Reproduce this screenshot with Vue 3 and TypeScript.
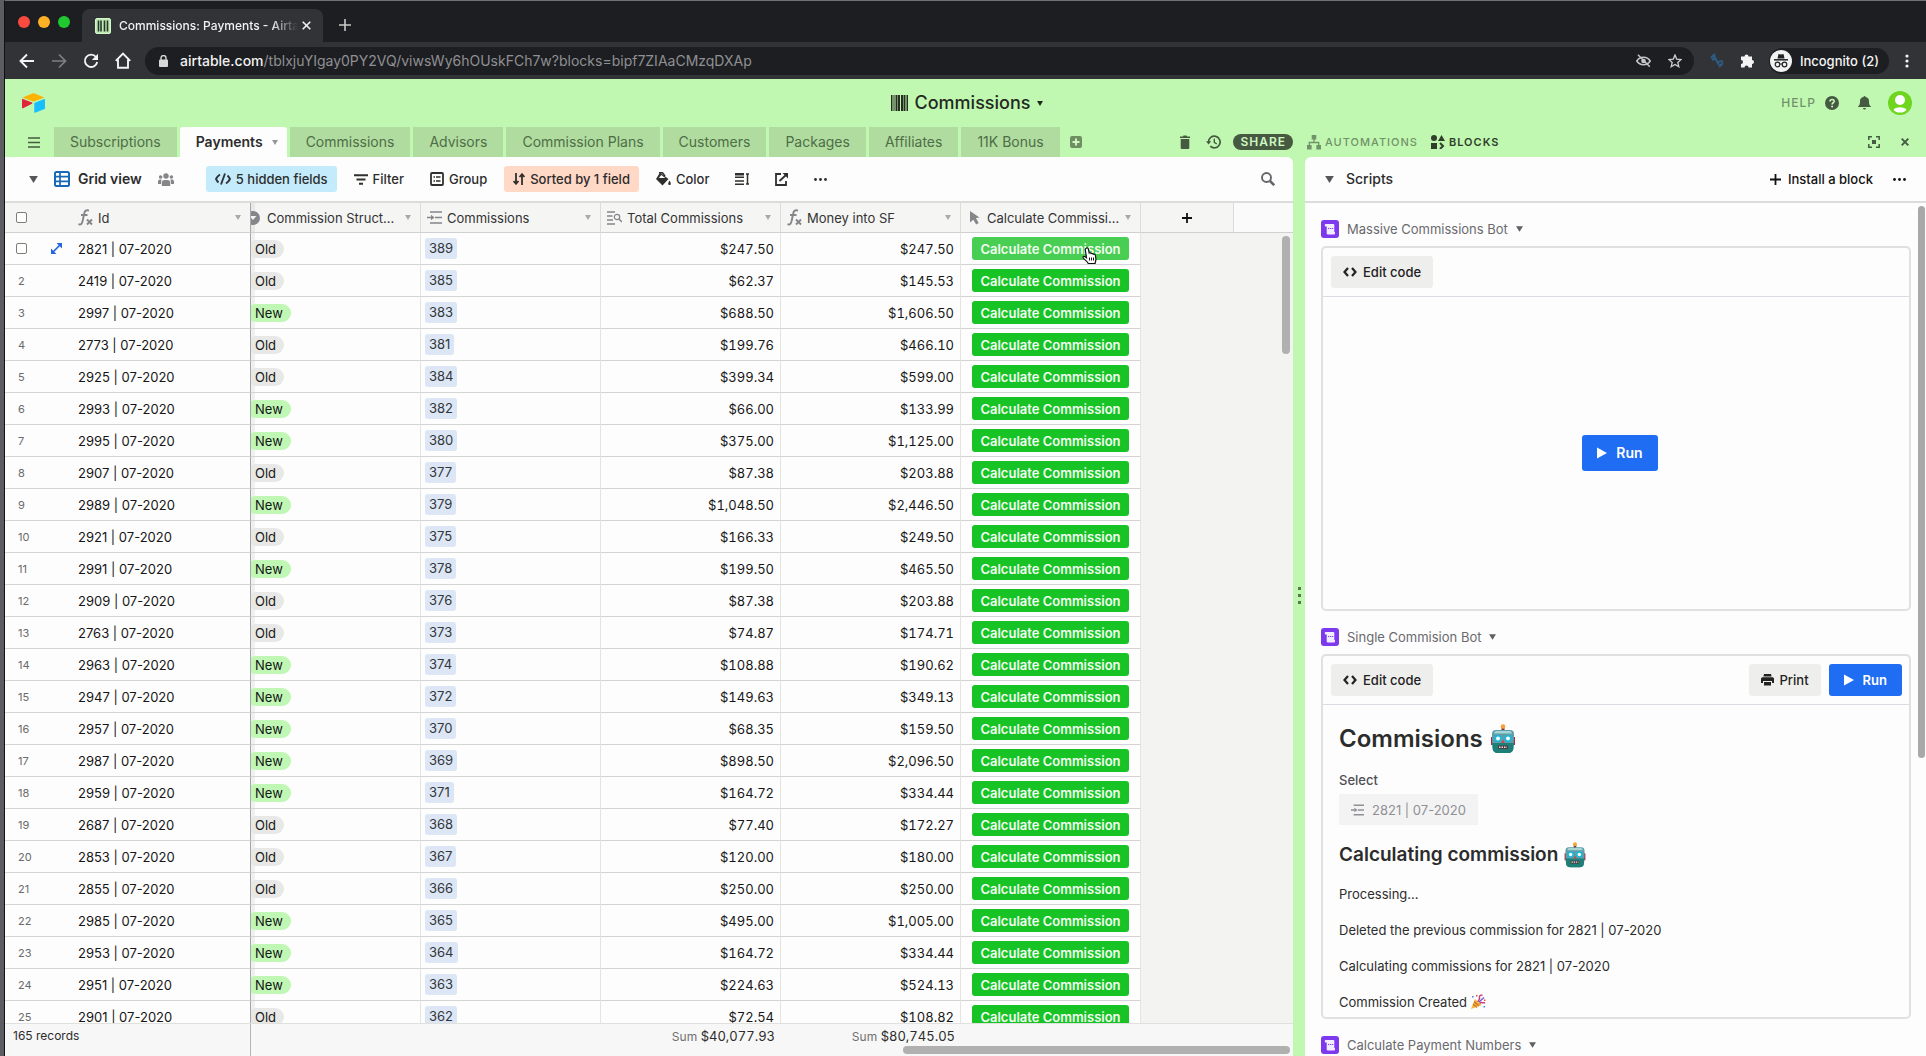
<script setup lang="ts">
import { ref } from 'vue'

interface Payment {
  id: string
  structure: 'Old' | 'New'
  commission: string
  total: string
  money: string
}

const source: [string, 'Old' | 'New', string, string, string][] = [
  ['2821', 'Old', '389', '$247.50', '$247.50'],
  ['2419', 'Old', '385', '$62.37', '$145.53'],
  ['2997', 'New', '383', '$688.50', '$1,606.50'],
  ['2773', 'Old', '381', '$199.76', '$466.10'],
  ['2925', 'Old', '384', '$399.34', '$599.00'],
  ['2993', 'New', '382', '$66.00', '$133.99'],
  ['2995', 'New', '380', '$375.00', '$1,125.00'],
  ['2907', 'Old', '377', '$87.38', '$203.88'],
  ['2989', 'New', '379', '$1,048.50', '$2,446.50'],
  ['2921', 'Old', '375', '$166.33', '$249.50'],
  ['2991', 'New', '378', '$199.50', '$465.50'],
  ['2909', 'Old', '376', '$87.38', '$203.88'],
  ['2763', 'Old', '373', '$74.87', '$174.71'],
  ['2963', 'New', '374', '$108.88', '$190.62'],
  ['2947', 'New', '372', '$149.63', '$349.13'],
  ['2957', 'New', '370', '$68.35', '$159.50'],
  ['2987', 'New', '369', '$898.50', '$2,096.50'],
  ['2959', 'New', '371', '$164.72', '$334.44'],
  ['2687', 'Old', '368', '$77.40', '$172.27'],
  ['2853', 'Old', '367', '$120.00', '$180.00'],
  ['2855', 'Old', '366', '$250.00', '$250.00'],
  ['2985', 'New', '365', '$495.00', '$1,005.00'],
  ['2953', 'New', '364', '$164.72', '$334.44'],
  ['2951', 'New', '363', '$224.63', '$524.13'],
  ['2901', 'Old', '362', '$72.54', '$108.82'],
]
const rows: Payment[] = source.map(([n, structure, commission, total, money]) => ({
  id: `${n} | 07-2020`,
  structure,
  commission,
  total,
  money,
}))

const tabs = ['Subscriptions', 'Payments', 'Commissions', 'Advisors', 'Commission Plans', 'Customers', 'Packages', 'Affiliates', '11K Bonus']
const active = ref('Payments')
const output = ['Processing...', 'Deleted the previous commission for 2821 | 07-2020', 'Calculating commissions for 2821 | 07-2020']
</script>

<template>
  <div class="desktop">
    <svg class="sprite" aria-hidden="true">
      <symbol id="caret" viewBox="0 0 10 8"><path d="M0 0h10L5 8z" fill="currentColor" /></symbol>
      <symbol id="fx" viewBox="0 0 15 17">
        <path d="M0.5 15.2c2.6 1 3.6-.8 4.200-3.600L6.200 4.500C6.700 1.800 8.300.6 11 1.600M3 6h6.500" fill="none" stroke="currentColor" stroke-width="1.900" />
        <path d="M9 10.500l5 5M14 10.500l-5 5" stroke="currentColor" stroke-width="1.900" />
      </symbol>
      <symbol id="link" viewBox="0 0 15 13">
        <path d="M3 1h12M8 6.500h7M3 12h12M0 6.500h5" stroke="currentColor" stroke-width="1.700" />
        <path d="M4 3.800L7.500 6.500 4 9.200z" fill="currentColor" />
      </symbol>
      <symbol id="lookup" viewBox="0 0 15 14">
        <path d="M0 1h8M0 5h5.500M0 9h6M0 13h8" stroke="currentColor" stroke-width="1.700" />
        <circle cx="10" cy="6" r="2.700" fill="none" stroke="currentColor" stroke-width="1.200" />
        <path d="M12 8l3 3" stroke="currentColor" stroke-width="1.500" />
      </symbol>
      <symbol id="code" viewBox="0 0 14 10">
        <path d="M5 1L1.500 5 5 9M9 1l3.500 4L9 9" fill="none" stroke="currentColor" stroke-width="2.200" />
      </symbol>
      <symbol id="play" viewBox="0 0 10 12"><path d="M0 0.500L10 6 0 11.500z" fill="currentColor" /></symbol>
      <symbol id="script" viewBox="0 0 18 18">
        <rect width="18" height="18" rx="3" fill="#7c39ed" />
        <path d="M4.500 4h8A.8.8 0 0 1 13.300 4.800V12h.7v1.500a1 1 0 0 1-1 1H7A1.300 1.300 0 0 1 5.700 13.200V6.500H4.500A1 1 0 0 1 3.800 5.200 1 1 0 0 1 4.500 4z" fill="#f3ecff" />
        <path d="M7 8.500h1.200M9 8.500h1.200M11 8.500h1.200" stroke="#7c39ed" stroke-width="1.200" />
      </symbol>
      <symbol id="dots" viewBox="0 0 13 3">
        <circle cx="1.500" cy="1.500" r="1.400" fill="currentColor" /><circle cx="6.500" cy="1.500" r="1.400" fill="currentColor" /><circle cx="11.500" cy="1.500" r="1.400" fill="currentColor" />
      </symbol>
      <symbol id="robot" viewBox="0 0 24 30">
        <path d="M10.500 3h3v4h-3z" fill="#6d3b3a" />
        <circle cx="12" cy="2.500" r="2.300" fill="#f8a13a" />
        <path d="M0 13h3v8H0zM21 13h3v8h-3z" fill="#a82c48" />
        <path d="M5 6h14a4 4 0 0 1 4 4v4l-.5 10a5 5 0 0 1-5 5h-11a5 5 0 0 1-5-5L1 14v-4a4 4 0 0 1 4-4z" fill="#5b9faa" />
        <path d="M1.300 19h21.400l-.4 5.500a4.500 4.500 0 0 1-4.500 4.500H6.200a4.500 4.500 0 0 1-4.500-4.500z" fill="#1d7f78" />
        <path d="M5 7h14a3 3 0 0 1 2 2.500H3A3 3 0 0 1 5 7z" fill="#a9d4d6" />
        <circle cx="7" cy="14.500" r="3.500" fill="#18b8dc" /><circle cx="17" cy="14.500" r="3.500" fill="#18b8dc" />
        <circle cx="7" cy="14.500" r="2" fill="#f4ffff" /><circle cx="17" cy="14.500" r="2" fill="#f4ffff" />
        <path d="M12 15.500l1.700 3.500h-3.400z" fill="#d5443f" />
        <path d="M7 21.500h10v3.500H7z" fill="#4a3d48" /><path d="M8 23.200h8" stroke="#e9e0cf" stroke-width="1.600" stroke-dasharray="1.500 1" />
      </symbol>
    </svg>

    <header class="chrome">
      <div class="strip">
        <span class="light red"></span><span class="light amber"></span><span class="light green"></span>
        <div class="browser-tab">
          <svg width="16" height="16" viewBox="0 0 16 16"><rect x="0.500" y="0.500" width="15" height="15" rx="1.500" fill="#bfe8b4" stroke="#d3f8c8" /><path d="M3.500 2.500v11M6 2.500v11M9.500 2.500v11M12.500 2.500v11" stroke="#26352a" stroke-width="1.600" /></svg>
          <span class="tab-title">Commissions: Payments - Airta</span>
          <button class="plain" aria-label="Close tab"><svg width="9" height="9" viewBox="0 0 9 9"><path d="M.7.7l7.600 7.600M8.300.7L.7 8.300" stroke="#f1f1f1" stroke-width="1.600" /></svg></button>
        </div>
        <button class="plain new-tab" aria-label="New tab"><svg width="12" height="12" viewBox="0 0 12 12"><path d="M6 0v12M0 6h12" stroke="#c9c9c9" stroke-width="1.600" /></svg></button>
      </div>
      <div class="nav">
        <button class="plain" aria-label="Back"><svg width="16" height="16" viewBox="0 0 16 16" fill="none" stroke="#f4f4f4" stroke-width="1.900"><path d="M15 8H2M8 1.500L1.500 8 8 14.500" /></svg></button>
        <button class="plain" aria-label="Forward"><svg width="16" height="16" viewBox="0 0 16 16" fill="none" stroke="#7f8083" stroke-width="1.700"><path d="M1 8h13M8 1.500L14.500 8 8 14.500" /></svg></button>
        <button class="plain" aria-label="Reload"><svg width="16" height="16" viewBox="0 0 16 16"><path d="M13 4A6.200 6.200 0 1 0 14.200 9" fill="none" stroke="#f4f4f4" stroke-width="1.900" /><path d="M15 .8V7H8.800z" fill="#f4f4f4" /></svg></button>
        <button class="plain" aria-label="Home"><svg width="16" height="17" viewBox="0 0 16 17"><path d="M.8 8.800L8 1.500l7.200 7.300M3 7.500V15.800h10V7.500" fill="none" stroke="#f4f4f4" stroke-width="1.900" /></svg></button>
        <div class="omnibox">
          <svg width="9" height="12" viewBox="0 0 9 12"><rect y="4.500" width="9" height="7.500" rx="1" fill="#d8d8d8" /><path d="M2 5V3a2.500 2.500 0 0 1 5 0v2" fill="none" stroke="#d8d8d8" stroke-width="1.400" /></svg>
          <span class="url"><b>airtable.com</b>/tblxjuYIgay0PY2VQ/viwsWy6hOUskFCh7w?blocks=bipf7ZIAaCMzqDXAp</span>
          <svg width="15" height="14" viewBox="0 0 15 14"><path d="M.8 7C4 2 11 2 14.200 7 11 12 4 12 .8 7z" fill="none" stroke="#c5c5c8" stroke-width="1.500" /><circle cx="7.500" cy="7" r="2.300" fill="#c5c5c8" /><path d="M2 .8L13.800 12.800" stroke="#c5c5c8" stroke-width="1.500" /></svg>
          <svg width="14" height="14" viewBox="0 0 14 14"><path d="M7 1l1.700 4.100 4.400.4-3.300 2.900 1 4.300L7 10.400l-3.800 2.300 1-4.300L.9 5.500l4.400-.4z" fill="none" stroke="#d0d0d3" stroke-width="1.300" /></svg>
        </div>
        <svg class="ext" width="14" height="15" viewBox="0 0 14 15"><path d="M4 3l5 9M1 5l4-4M2 7l4-2M8 9l5-1M9 14l4-4" stroke="#2d5d86" stroke-width="2" /></svg>
        <svg class="puzzle" width="15" height="15" viewBox="0 0 15 15"><path d="M1 3.500h3.500a2 2 0 1 1 4 0H12V7a2 2 0 1 1 0 4v3.500H8.500a2 2 0 1 0-4 0H1V11a2 2 0 1 0 0-4z" fill="#f4f4f4" /></svg>
        <button class="incognito">
          <svg width="22" height="22" viewBox="0 0 22 22"><circle cx="11" cy="11" r="11" fill="#f1f1f1" /><path d="M7.500 8.500l1-4.500 2.500.6 2.500-.6 1 4.500z" fill="#202124" /><path d="M4 9.800h14" stroke="#202124" stroke-width="1.500" /><circle cx="7.500" cy="14.500" r="2.300" fill="none" stroke="#202124" stroke-width="1.200" /><circle cx="14.500" cy="14.500" r="2.300" fill="none" stroke="#202124" stroke-width="1.200" /><path d="M9.500 14h3" stroke="#202124" /></svg>
          Incognito (2)
        </button>
        <button class="plain" aria-label="Browser menu"><svg width="4" height="14" viewBox="0 0 4 14" fill="#f4f4f4"><circle cx="2" cy="2" r="1.600" /><circle cx="2" cy="7" r="1.600" /><circle cx="2" cy="12" r="1.600" /></svg></button>
      </div>
    </header>

    <div class="basebar">
      <svg class="logo" width="23" height="20" viewBox="0 0 23 20"><path d="M10.300.4a3 3 0 0 1 2.300 0l8.700 3.500c.5.2.5.8 0 1l-8.700 3.400a3 3 0 0 1-2.300 0L1.700 4.900c-.5-.2-.5-.8 0-1z" fill="#fcb400" /><path d="M12.300 10.300v8.900c0 .4.400.7.800.5l9.500-3.700a.6.600 0 0 0 .4-.5V6.500c0-.4-.4-.7-.8-.5l-9.500 3.700a.6.600 0 0 0-.4.600z" fill="#18bfff" /><path d="M10 10.700L1 15.200c-.4.200-1-.1-1-.5V6.500c0-.5.500-.8 1-.6l9 3.700c.5.300.5.900 0 1.100z" fill="#e0243c" /></svg>
      <button class="base-name">
        <svg width="17" height="16" viewBox="0 0 17 16" fill="#262e22"><path d="M0 0h1.500v16H0zM2.500 0h1v16h-1zM4.500 0H6v16H4.500zM6.500 0H9v16H6.500zM10 0h2.500v16H10zM13 0h1.500v16H13zM15.500 0H17v16h-1.500z" /></svg>
        <span>Commissions</span>
        <svg class="c6"><use href="#caret" /></svg>
      </button>
      <div class="account">
        <a href="#help" class="caps muted">HELP</a>
        <svg width="14" height="14" viewBox="0 0 14 14"><circle cx="7" cy="7" r="7" fill="#455a40" /><path d="M5 5.500C5 2.700 9.200 2.900 9.200 5.300 9.200 6.800 7.100 6.700 7.100 8.400" fill="none" stroke="#c8f7b8" stroke-width="1.600" /><circle cx="7.100" cy="10.500" r="1" fill="#c8f7b8" /></svg>
        <svg class="bell" width="13" height="14" viewBox="0 0 13 14"><path d="M6.500 0a1 1 0 0 1 1 1c2.500.5 3.500 2 3.500 4 0 3 .4 4.500 2 5.600V11H0v-.4C1.600 9.500 2 8 2 5c0-2 1-3.500 3.500-4a1 1 0 0 1 1-1zM5 12h3a1.500 1.500 0 0 1-3 0z" fill="#455a40" /></svg>
        <svg width="24" height="24" viewBox="0 0 24 24"><circle cx="12" cy="12" r="12" fill="#6fd51f" /><circle cx="12" cy="9" r="5" fill="#fff" /><path d="M5.500 19c1-3.600 12-3.600 13 0-2.500 3.400-10.500 3.400-13 0z" fill="#fff" /></svg>
      </div>
    </div>

    <div class="tabbar">
      <div class="tabs-left">
        <button class="plain burger" aria-label="All tables"><svg width="12" height="11" viewBox="0 0 12 11"><path d="M0 1h12M0 5.500h12M0 10h12" stroke="#455a40" stroke-width="1.700" /></svg></button>
        <nav class="tabs" role="tablist">
          <button v-for="t in tabs" :key="t" class="tab" role="tab" :class="{ active: t === active }" :aria-selected="t === active" @click="active = t">
            {{ t }}<svg v-if="t === active" class="c6"><use href="#caret" /></svg>
          </button>
        </nav>
        <button class="plain" aria-label="Add table"><svg width="12" height="12" viewBox="0 0 12 12"><rect width="12" height="12" rx="2" fill="#6d8f62" /><path d="M6 2.500v7M2.500 6h7" stroke="#d2f8c6" stroke-width="1.900" /></svg></button>
        <span class="grow"></span>
        <button class="plain" aria-label="Trash"><svg width="10" height="14" viewBox="0 0 10 14"><path d="M0 1.500h3L3.500.5h3L7 1.500h3V3H0zM.7 4h8.600v9a1 1 0 0 1-1 1H1.700a1 1 0 0 1-1-1z" fill="#455a40" /></svg></button>
        <button class="plain history" aria-label="History"><svg width="15" height="14" viewBox="0 0 15 14"><path d="M2.500 7a5.800 5.800 0 1 1 1.800 4.200" fill="none" stroke="#455a40" stroke-width="1.700" /><path d="M0 6.200h5.200L2.600 9.500z" fill="#455a40" /><path d="M8.300 3.800V7.400l2.500 1.600" fill="none" stroke="#455a40" stroke-width="1.400" /></svg></button>
        <button class="share caps">SHARE</button>
      </div>
      <div class="tabs-right">
        <button class="side caps muted"><svg width="14" height="15" viewBox="0 0 14 15" fill="#72926a"><path d="M4.700 0h4.600v4.600H4.700zM0 10h4.600v4.600H0zM9.400 10H14v4.600H9.400z" /><path d="M7 4v3.500M2.300 10.500v-3h9.400v3" fill="none" stroke="#72926a" stroke-width="1.300" /></svg>AUTOMATIONS</button>
        <button class="side caps dark"><svg width="14" height="14" viewBox="0 0 14 14" fill="#303f2b"><circle cx="3" cy="3" r="3" /><path d="M10.500 0L14 6H7zM0 8h6v6H0z" /><path d="M9 8l3 3-3 3" fill="none" stroke="#303f2b" stroke-width="2" /></svg>BLOCKS</button>
        <span class="grow"></span>
        <button class="plain" aria-label="Fullscreen"><svg width="12" height="12" viewBox="0 0 12 12"><path d="M.8 4V.8H4M8 .8h3.200V4M11.200 8v3.200H8M4 11.200H.8V8" fill="none" stroke="#455a40" stroke-width="1.500" /><path d="M4 4h4v4H4z" fill="#455a40" /></svg></button>
        <button class="plain close-blocks" aria-label="Close blocks"><svg width="8" height="8" viewBox="0 0 8 8"><path d="M.7.7l6.600 6.600M7.300.7L.7 7.300" stroke="#455a40" stroke-width="1.900" /></svg></button>
      </div>
    </div>

    <main class="workspace">
      <section class="grid-panel">
        <div class="toolbar">
          <button class="plain" aria-label="Views"><svg class="c8"><use href="#caret" /></svg></button>
          <button class="view-name"><svg width="16" height="16" viewBox="0 0 16 16"><rect x="1" y="1" width="14" height="14" rx="1.500" fill="#fff" stroke="#1968b8" stroke-width="2" /><path d="M1 5.700h14M1 10.300h14M6 1v14" stroke="#1968b8" stroke-width="1.700" /></svg>Grid view</button>
          <svg class="people" width="16" height="13" viewBox="0 0 16 13" fill="#85858a"><circle cx="8" cy="3" r="2.700" /><circle cx="2.600" cy="4" r="1.800" /><circle cx="13.400" cy="4" r="1.800" /><path d="M3.800 13V10a3 3 0 0 1 3-3h2.400a3 3 0 0 1 3 3v3zM0 11V8.500a2 2 0 0 1 2-2h1.500L3 11zM16 11V8.500a2 2 0 0 0-2-2h-1.500L13 11z" /></svg>
          <div class="tools">
            <button class="tool hidden"><svg width="16" height="12" viewBox="0 0 16 12" fill="none" stroke="#30353b" stroke-width="1.900"><path d="M5 1.500Q2.500 3 1 6q1 2 2.500 3.500M11 10.500Q13.500 9 15 6q-1-2-2.500-3.500M10 .5L6 11.500" /></svg>5 hidden fields</button>
            <button class="tool"><svg width="14" height="11" viewBox="0 0 14 11"><path d="M0 1.200h14M2.500 5.500h9M5 9.800h4" stroke="#30302e" stroke-width="2" /></svg>Filter</button>
            <button class="tool"><svg width="14" height="14" viewBox="0 0 14 14"><rect x="1" y="1" width="12" height="12" rx="1" fill="none" stroke="#30302e" stroke-width="1.800" /><path d="M3.500 5h1.500M6 5h4.500M3.500 9h1.500M6 9h4.500" stroke="#30302e" stroke-width="1.700" /></svg>Group</button>
            <button class="tool sorted"><svg width="12" height="12" viewBox="0 0 12 12" fill="none" stroke="#30302e" stroke-width="1.800"><path d="M3 0v10.500M.5 8L3 10.800 5.500 8M9 12V1.500M6.500 4L9 1.200 11.500 4" /></svg>Sorted by 1 field</button>
            <button class="tool"><svg width="15" height="14" viewBox="0 0 15 14"><path d="M4 .5l8.500 6.500L6.500 13.500 0 7z" fill="#30302e" /><path d="M5.200 3L2.800 6h6.500z" fill="#fdfdfd" /><path d="M3 .8h3.500L9 4" fill="none" stroke="#30302e" stroke-width="1.500" /><path d="M13.500 8.500c1.700 2.400 1.700 4.500 0 4.500s-1.700-2.100 0-4.500z" fill="#30302e" /></svg>Color</button>
            <button class="tool" aria-label="Row height"><svg width="14" height="12" viewBox="0 0 14 12"><path d="M0 4.300h9M0 8h9M0 11.200h9M12.500 1v10M11 1h3M11 11h3" stroke="#30302e" stroke-width="1.500" /><path d="M0 1.300h9" stroke="#30302e" stroke-width="2.600" /></svg></button>
            <button class="tool" aria-label="Share view"><svg width="13" height="13" viewBox="0 0 13 13" fill="none" stroke="#30302e" stroke-width="1.800"><path d="M6 1H1v11h10V8M4.500 8L11 2" /><path d="M7.500 0H13v5.500z" fill="#30302e" stroke="none" /></svg></button>
            <button class="tool" aria-label="More"><svg width="13" height="3"><use href="#dots" /></svg></button>
          </div>
          <span class="grow"></span>
          <button class="plain search" aria-label="Search"><svg width="14" height="14" viewBox="0 0 14 14"><circle cx="5.500" cy="5.500" r="4.500" fill="none" stroke="#65656a" stroke-width="1.900" /><path d="M9 9l4.200 4.200" stroke="#65656a" stroke-width="2.600" /></svg></button>
        </div>

        <div class="sheet">
          <table>
            <colgroup>
              <col class="w-num" /><col class="w-id" /><col class="w-struct" /><col class="w-field" /><col class="w-field" /><col class="w-field" /><col class="w-field" /><col class="w-add" /><col />
            </colgroup>
            <thead>
              <tr>
                <th><div class="num"><input type="checkbox" aria-label="Select all rows" /></div></th>
                <th class="frozen"><div class="head first"><svg width="15" height="17"><use href="#fx" /></svg><span>Id</span><svg class="c6"><use href="#caret" /></svg></div></th>
                <th class="under"><div class="head clipped"><svg width="14" height="14" viewBox="0 0 14 14"><circle cx="7" cy="7" r="7" fill="#85858a" /><path d="M3.500 5L7 9l3.500-4z" fill="#f4f4f2" /></svg><span>Commission Struct...</span><svg class="c6"><use href="#caret" /></svg></div></th>
                <th><div class="head"><svg width="15" height="13"><use href="#link" /></svg><span>Commissions</span><svg class="c6"><use href="#caret" /></svg></div></th>
                <th><div class="head"><svg width="15" height="14"><use href="#lookup" /></svg><span>Total Commissions</span><svg class="c6"><use href="#caret" /></svg></div></th>
                <th><div class="head"><svg width="15" height="17"><use href="#fx" /></svg><span>Money into SF</span><svg class="c6"><use href="#caret" /></svg></div></th>
                <th><div class="head"><svg width="15" height="14" viewBox="0 0 15 14"><path d="M3 0l9.500 6.500-3.600.6 2.800 5-2.500 1.500-2.900-4.900L3 11.500z" fill="#85858a" /></svg><span>Calculate Commissi...</span><svg class="c6"><use href="#caret" /></svg></div></th>
                <th><button class="plain add" aria-label="Add field"><svg width="10" height="10" viewBox="0 0 10 10"><path d="M5 0v10M0 5h10" stroke="#111" stroke-width="1.800" /></svg></button></th>
                <th class="rest"></th>
              </tr>
            </thead>
            <tbody>
              <tr v-for="(r, i) in rows" :key="r.id">
                <td>
                  <div class="num">
                    <template v-if="i === 0">
                      <input type="checkbox" aria-label="Select row 1" />
                      <svg class="expand" width="11" height="11" viewBox="0 0 11 11"><path d="M2.500 8.500l6-6" stroke="#2468e0" stroke-width="1.700" /><path d="M5.500 0H11v5.500zM0 5.500V11h5.500z" fill="#2468e0" /></svg>
                    </template>
                    <template v-else>{{ i + 1 }}</template>
                  </div>
                </td>
                <td class="frozen"><span class="rec">{{ r.id }}</span></td>
                <td class="under"><span class="pill" :class="r.structure.toLowerCase()">{{ r.structure }}</span></td>
                <td><span class="chip">{{ r.commission }}</span></td>
                <td class="amount">{{ r.total }}</td>
                <td class="amount">{{ r.money }}</td>
                <td>
                  <button class="calc" :class="{ hover: i === 0 }">
                    Calculate Commission
                    <svg v-if="i === 0" class="pointer" width="15" height="18" viewBox="0 0 15 18"><path d="M4.200 1.200c1-.7 2 0 2.200 1L7.200 6c.9-.5 1.700-.2 2 .6.9-.5 1.700-.1 2 .7 1-.4 2 .1 2.200 1.200l.5 3.300c.2 1.600-.6 2.600-.8 4.700H6.300c-.7-2-3.600-3.500-5-5.500-.7-1 .3-2 1.400-1.500l1.800 1.200L3.300 2.800c-.1-.7.200-1.300.9-1.600z" fill="#fff" stroke="#111" stroke-width="1.200" /><path d="M7.500 10.500v3M9.500 10.500v3M11.500 10.500v3" stroke="#111" /></svg>
                  </button>
                </td>
                <td v-if="i === 0" class="void" colspan="2" :rowspan="rows.length"></td>
              </tr>
            </tbody>
          </table>
          <span class="bar vertical"></span>
        </div>

        <footer class="summary">
          <span class="count">165 records</span>
          <span></span><span></span>
          <span class="sum"><small>Sum</small> $40,077.93</span>
          <span class="sum"><small>Sum</small> $80,745.05</span>
          <span class="bar horizontal"></span>
        </footer>
      </section>

      <div class="splitter"><i></i><i></i><i></i></div>

      <aside class="blocks">
        <div class="blocks-head">
          <button class="plain" aria-label="Dashboards"><svg class="c8"><use href="#caret" /></svg></button>
          <span class="dash">Scripts</span>
          <span class="grow"></span>
          <button class="install"><svg width="11" height="11" viewBox="0 0 11 11"><path d="M5.500 0v11M0 5.500h11" stroke="#111" stroke-width="1.800" /></svg>Install a block</button>
          <button class="plain more" aria-label="More"><svg width="13" height="3"><use href="#dots" /></svg></button>
        </div>
        <div class="block-list">
          <button class="block-title"><svg width="18" height="18"><use href="#script" /></svg>Massive Commissions Bot<svg class="c7"><use href="#caret" /></svg></button>
          <article class="card">
            <div class="card-head"><button class="btn"><svg width="14" height="10"><use href="#code" /></svg>Edit code</button></div>
            <div class="launch"><button class="btn run big"><svg width="10" height="12"><use href="#play" /></svg>Run</button></div>
          </article>
          <button class="block-title"><svg width="18" height="18"><use href="#script" /></svg>Single Commision Bot<svg class="c7"><use href="#caret" /></svg></button>
          <article class="card">
            <div class="card-head">
              <button class="btn"><svg width="14" height="10"><use href="#code" /></svg>Edit code</button>
              <span class="grow"></span>
              <button class="btn"><svg width="13" height="12" viewBox="0 0 13 12"><path d="M3 0h7l.6 2.500H2.400zM1.500 3.300h10A1.500 1.500 0 0 1 13 4.800V9h-2V7H2v2H0V4.800a1.500 1.500 0 0 1 1.500-1.500zM3 8h7v3.500H3z" fill="#222" /></svg>Print</button>
              <button class="btn run"><svg width="10" height="12"><use href="#play" /></svg>Run</button>
            </div>
            <div class="log">
              <h1>Commisions <svg width="24" height="30"><use href="#robot" /></svg></h1>
              <span id="pick" class="label">Select</span>
              <button class="picked" aria-describedby="pick"><svg width="13" height="12"><use href="#link" /></svg>2821 | 07-2020</button>
              <h2>Calculating commission <svg width="22" height="26"><use href="#robot" /></svg></h2>
              <p v-for="line in output" :key="line">{{ line }}</p>
              <p>Commission Created <svg class="party" width="16" height="16" viewBox="0 0 16 16"><path d="M1 15L5 5l6.500 6z" fill="#f2b632" /><path d="M3 10l4 3.500M4 7.500l5 4.500" stroke="#c9772a" stroke-width="1.300" /><path d="M8 8c0-2 2-2 1.500-4.500S11 1 12.500 1M9.500 9.500c2-2 3.500 0 5.500-1" fill="none" stroke="#c83f7d" stroke-width="1.500" /><path d="M9 8l5-4.500" stroke="#7a55c9" stroke-width="1.400" /><path d="M2 2h1.600v1.600H2zM13.500 12h1.600v1.600h-1.600z" fill="#4a7fe0" /><path d="M6 1h1.500v1.500H6zM14 5.500h1.500V7H14z" fill="#e0503c" /></svg></p>
            </div>
          </article>
          <button class="block-title"><svg width="18" height="18"><use href="#script" /></svg>Calculate Payment Numbers<svg class="c7"><use href="#caret" /></svg></button>
          <span class="bar side-bar"></span>
        </div>
      </aside>
    </main>
  </div>
</template>

<style>
html,
body {
  margin: 0;
  background: #5c5c62;
}
</style>

<style scoped>
.desktop {
  box-sizing: border-box;
  height: 100vh;
  display: flex;
  flex-direction: column;
  overflow: hidden;
  margin-left: 4px;
  border-left: 1px solid #111;
  border-top: 1px solid #707075;
  background: #c1f8b1;
  color: #2c2c2c;
  font: 13px/16px Inter, "Liberation Sans", sans-serif;
  white-space: nowrap;
}
.desktop * {
  box-sizing: border-box;
}
svg {
  flex: none;
  display: block;
}
button {
  font: inherit;
  color: inherit;
  border: 0;
  background: none;
  padding: 0;
  margin: 0;
  cursor: pointer;
}
a {
  text-decoration: none;
}
.sprite {
  position: absolute;
  width: 0;
  height: 0;
}
.plain {
  display: flex;
  align-items: center;
  justify-content: center;
}
.grow {
  flex: 1;
}
.c6 { width: 6px; height: 5px; }
.c7 { width: 7px; height: 6px; }
.c8 { width: 9px; height: 7px; color: #56565a; }
.caps {
  font-size: 12px;
  font-weight: 500;
  letter-spacing: 1px;
}
.muted { color: #72926a; }
.dark { color: #303f2b; }

/* browser window */
.chrome { background: #1d1e21; }
.strip {
  height: 41px;
  display: flex;
  align-items: center;
  padding-left: 13px;
}
.light {
  width: 12px;
  height: 12px;
  margin-right: 8px;
  border-radius: 50%;
}
.red { background: #fb4a3f; }
.amber { background: #fdb125; }
.green { background: #1fc92f; }
.browser-tab {
  align-self: flex-end;
  width: 241px;
  height: 33px;
  margin-left: 4px;
  padding: 0 12px 0 13px;
  display: flex;
  align-items: center;
  background: #323336;
  border-radius: 8px 8px 0 0;
  color: #f1f1f1;
}
.tab-title {
  width: 180px;
  margin: 0 4px 0 8px;
  overflow: hidden;
  font-weight: 500;
  font-size: 12px;
  mask-image: linear-gradient(to right, #000 85%, transparent);
}
.new-tab { margin-left: 16px; padding-top: 6px; }
.nav {
  height: 37px;
  display: flex;
  align-items: center;
  gap: 16px;
  padding: 0 17px 0 14px;
  background: #323336;
}
.omnibox {
  flex: 1;
  height: 28px;
  margin-left: -2px;
  padding: 0 12px 0 14px;
  display: flex;
  align-items: center;
  gap: 17px;
  border-radius: 14px;
  background: #1d1e21;
}
.url {
  flex: 1;
  margin-left: -5px;
  overflow: hidden;
  color: #8f9094;
  font-size: 14px;
}
.url b { color: #f1f1f1; font-weight: 500; }
.puzzle { margin-right: -2px; }
.incognito {
  height: 26px;
  padding: 0 10px 0 1px;
  display: flex;
  align-items: center;
  gap: 8px;
  border-radius: 13px;
  background: #1d1e21;
  color: #f4f4f4;
  font-size: 13px;
  font-weight: 500;
}

/* base header */
.basebar {
  height: 48px;
  padding: 0 14px 0 17px;
  display: grid;
  grid-template-columns: 1fr auto 1fr;
  align-items: center;
}
.base-name {
  display: flex;
  align-items: center;
  gap: 7px;
  color: #23291f;
  font-size: 18px;
  line-height: 24px;
  font-weight: 500;
}
.account {
  justify-self: end;
  display: flex;
  align-items: center;
  gap: 17px;
}
.account a { margin-right: -8px; }
.bell { margin-left: 2px; }
.tabbar {
  height: 30px;
  display: flex;
  gap: 12px;
}
.tabs-left {
  flex: 1;
  display: flex;
  align-items: center;
  color: #4f6d46;
}
.tabs-right {
  flex: 0 0 621px;
  display: flex;
  align-items: center;
  padding: 0 17px 0 2px;
}
.burger { margin: 0 14px 0 23px; }
.tabs {
  display: flex;
  align-self: stretch;
  gap: 3px;
  margin-right: 10px;
}
.tab {
  padding: 0 16px;
  display: flex;
  align-items: center;
  background: #b0dca0;
  font-size: 14px;
}
.tab.active {
  padding-right: 9px;
  gap: 9px;
  background: #fdfdfd;
  border-radius: 3px 3px 0 0;
  color: #2c2c2c;
  font-weight: 600;
}
.tab.active svg { color: #96969a; }
.history { margin: 0 12px 0 16px; }
.share {
  height: 16px;
  padding: 0 7px;
  border-radius: 8px;
  background: #455a40;
  color: #d0f8c4;
  font-weight: 600;
}
.side {
  display: flex;
  align-items: center;
  gap: 4px;
  margin-right: 13px;
  font-size: 11px;
}
.side.dark { font-weight: 600; }
.close-blocks { margin-left: 21px; }

/* workspace */
.workspace {
  flex: 1;
  min-height: 0;
  display: flex;
}
.grid-panel {
  flex: 1;
  min-width: 0;
  display: flex;
  flex-direction: column;
  overflow: hidden;
  border-radius: 0 6px 0 0;
  background: #fdfdfd;
}
.toolbar,
.blocks-head {
  flex: none;
  height: 46px;
  display: flex;
  align-items: center;
  border-bottom: 2px solid #dcdcdc;
}
.toolbar { padding: 0 18px 0 24px; }
.view-name {
  display: flex;
  align-items: center;
  gap: 8px;
  margin: 0 16px;
  font-size: 14px;
  font-weight: 600;
}
.tools {
  display: flex;
  gap: 8px;
  margin-left: 32px;
}
.tool {
  height: 26px;
  padding: 0 9px;
  display: flex;
  align-items: center;
  gap: 5px;
  border-radius: 3px;
  font-weight: 500;
}
.tool.hidden { background: #c4ebfb; }
.tool.sorted { background: #ffd8c6; }

.sheet {
  position: relative;
  flex: 1;
  min-height: 0;
  overflow: hidden;
}
table {
  width: 100%;
  table-layout: fixed;
  border-collapse: separate;
  border-spacing: 0;
}
.w-num { width: 66px; }
.w-id { width: 180px; }
.w-struct { width: 170px; }
.w-field { width: 180px; }
.w-add { width: 93px; }
th {
  height: 30px;
  padding: 0;
  background: #f5f5f4;
  border-right: 1px solid #dcdcdc;
  border-bottom: 1px solid #d0d0d0;
  font-weight: 400;
  text-align: left;
  overflow: hidden;
}
td {
  height: 32px;
  padding: 0;
  border-right: 1px solid #e4e4e2;
  border-bottom: 1px solid #d4d4d2;
  overflow: hidden;
  color: #161616;
}
th:first-child,
td:first-child { border-right: 0; }
th.frozen,
td.frozen { border-right-color: #a8a8a8; }
.under { box-shadow: inset 4px 0 rgba(0, 0, 0, 0.05); }
th.rest { background: #fafafa; border-right: 0; }
td.void { background: #f3f3f2; border: 0; }
.num {
  display: flex;
  align-items: center;
  padding-left: 13px;
  color: #6a6a6a;
  font-size: 11px;
}
input[type='checkbox'] {
  appearance: none;
  width: 11px;
  height: 11px;
  margin: 0 0 0 -2px;
  border: 1px solid #7d7d78;
  border-radius: 2px;
  background: #fff;
}
.expand { margin-left: 24px; }
.head {
  display: flex;
  align-items: center;
  gap: 5px;
  padding: 0 9px 0 6px;
  color: #333;
}
.head span { flex: 1; }
.head > svg { color: #85858a; }
.head > svg.c6 { color: #a9a9ac; }
.head.first { padding-left: 7px; }
.head.clipped { margin-left: -5px; padding-left: 0; gap: 7px; }
.rec { padding-left: 7px; }
.pill {
  display: inline-block;
  height: 18px;
  margin-left: -4px;
  padding: 0 8px;
  border-radius: 9px;
  line-height: 18px;
}
.old { background: #e8e8e6; }
.new { background: #c0f7b4; }
.chip {
  display: inline-block;
  height: 21px;
  margin-left: 4px;
  padding: 0 4px;
  border-radius: 3px;
  background: #dce6f4;
  color: #33373d;
  line-height: 21px;
}
.amount {
  padding-right: 6px;
  text-align: right;
  font-variant-numeric: tabular-nums;
}
.calc {
  position: relative;
  display: block;
  width: 157px;
  height: 23px;
  margin-left: 11px;
  border-radius: 3px;
  background: #18c326;
  color: #f3fff2;
  font-weight: 600;
}
.calc.hover { background: #48ce52; }
.pointer {
  position: absolute;
  right: 32px;
  top: 10px;
}
.add { width: 100%; }
.bar {
  position: absolute;
  border-radius: 4px;
  background: #b0b0b0;
}
.vertical { right: 3px; top: 33px; width: 8px; height: 118px; }
.summary {
  position: relative;
  flex: none;
  height: 33px;
  display: grid;
  grid-template-columns: 246px 170px 180px 180px 180px;
  border-top: 1px solid #e0e0dd;
  background: #f7f7f7;
  line-height: 24px;
}
.count {
  padding-left: 8px;
  border-right: 1px solid #b4b4b4;
  font-size: 12px;
}
.sum {
  padding-right: 6px;
  text-align: right;
  font-variant-numeric: tabular-nums;
}
.sum small { color: #707070; font-size: 12px; }
.horizontal { right: 3px; bottom: 2px; width: 387px; height: 8px; }

.splitter {
  flex: 0 0 12px;
  display: flex;
  flex-direction: column;
  align-items: center;
  justify-content: center;
  gap: 4px;
  padding-bottom: 22px;
}
.splitter i {
  width: 3px;
  height: 3px;
  background: #58794e;
}

/* blocks */
.blocks {
  flex: 0 0 621px;
  display: flex;
  flex-direction: column;
  overflow: hidden;
  border-radius: 6px 0 0 0;
  background: #fdfdfd;
}
.blocks-head { padding: 0 20px; }
.dash { margin-left: 12px; font-size: 14px; font-weight: 500; }
.install {
  display: flex;
  align-items: center;
  gap: 7px;
  color: #111;
  font-weight: 500;
}
.more { margin-left: 20px; color: #111; }
.block-list {
  position: relative;
  flex: 1;
  min-height: 0;
  overflow: hidden;
  padding: 7px 15px 0 16px;
}
.block-title {
  height: 36px;
  padding-top: 2px;
  display: flex;
  align-items: center;
  gap: 8px;
  color: #6a6a6e;
}
.block-title .c7 { color: #606064; }
.card {
  height: 365px;
  margin-bottom: 7px;
  display: flex;
  flex-direction: column;
  overflow: hidden;
  border: 2px solid #e0e0e0;
  border-radius: 5px;
}
.card-head {
  flex: none;
  height: 49px;
  padding: 0 7px 0 8px;
  display: flex;
  align-items: center;
  gap: 8px;
  border-bottom: 1px solid #dcdce4;
}
.btn {
  height: 32px;
  padding: 0 12px;
  display: flex;
  align-items: center;
  gap: 6px;
  border-radius: 3px;
  background: #eeeeec;
  color: #222;
  font-weight: 500;
}
.btn.run {
  padding: 0 15px;
  gap: 9px;
  background: #1f6df2;
  color: #fff;
  font-weight: 600;
}
.btn.big { height: 36px; font-size: 14px; }
.launch {
  flex: 1;
  display: flex;
  align-items: center;
  justify-content: center;
  padding-left: 8px;
}
.log { padding: 16px; }
h1,
h2 {
  display: flex;
  align-items: center;
  gap: 8px;
  margin: 0;
  font-weight: 600;
}
h1 { font-size: 24px; line-height: 36px; }
h2 { margin-top: 16px; gap: 6px; font-size: 19px; line-height: 28px; }
.label {
  display: block;
  margin: 15px 0 6px;
  color: #505054;
  font-weight: 500;
}
.picked {
  height: 31px;
  padding: 0 12px;
  display: flex;
  align-items: center;
  gap: 8px;
  background: #f3f3f3;
  color: #909096;
}
.log p {
  display: flex;
  align-items: center;
  gap: 3px;
  margin: 20px 0 0;
}
.log h2 + p { margin-top: 17px; }
.side-bar { right: 1px; top: 3px; width: 7px; height: 552px; background: #a8a8a8; }
</style>
